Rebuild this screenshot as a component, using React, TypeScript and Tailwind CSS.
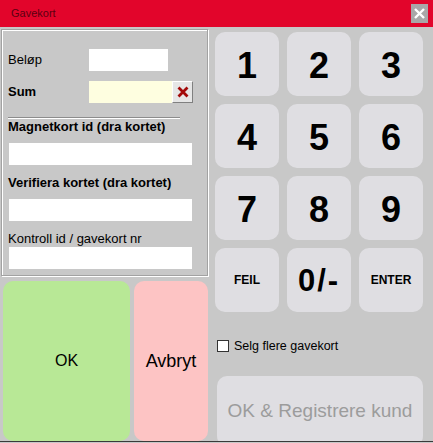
import React from 'react';

const font = { fontFamily: '"Liberation Sans", Arial, sans-serif' };

function Key({ children, className = '' }: { children: React.ReactNode; className?: string }) {
  return (
    <div className={`flex h-[64px] w-[64px] items-center justify-center rounded-[10px] bg-[#dfdee2] text-black ${className}`}>
      {children}
    </div>
  );
}

function Field({ className = '' }: { className?: string }) {
  return <div className={`h-[22px] bg-white ${className}`} />;
}

export default function App() {
  const digits = ['1', '2', '3', '4', '5', '6', '7', '8', '9'];

  return (
    <div className="flex h-[443px] w-[433px] flex-col overflow-hidden bg-[#c8c8c8]" style={font}>
      {/* title bar */}
      <div className="flex h-[27px] shrink-0 items-center justify-between bg-[#e2052b] pl-[11px] pr-[5px]">
        <span className="text-[11px] text-[#5c0010]">Gavekort</span>
        <div className="flex h-[19px] w-[17px] items-center justify-center bg-[#a9a7a8]">
          <svg width="11" height="11" viewBox="0 0 11 11">
            <path d="M1 1L10 10M10 1L1 10" stroke="#fff" strokeWidth="2.4" />
          </svg>
        </div>
      </div>

      {/* body */}
      <div className="flex h-[414px] shrink-0 overflow-hidden">
        {/* left column */}
        <div className="flex w-[209px] shrink-0 flex-col">
          <div className="ml-[1px] mt-[2px] h-[253px] w-[207px] border border-[#a2a2a2] pl-[6px] shadow-[inset_1px_1px_0_#ffffff,1px_1px_0_#ffffff]">
            <div className="mt-[19px] flex h-[22px] items-center">
              <span className="w-[81px] text-[13px] text-black">Beløp</span>
              <Field className="w-[79px]" />
            </div>
            <div className="mt-[10px] flex h-[22px] items-center">
              <span className="w-[81px] text-[13px] font-bold text-black">Sum</span>
              <div className="h-[22px] w-[83px] bg-[#fefee0]" />
              <div className="flex h-[22px] w-[21px] items-center justify-center border border-t-white border-l-white border-r-[#808080] border-b-[#808080] bg-[#e6e6e6]">
                <svg width="12" height="12" viewBox="0 0 12 12">
                  <path d="M1.5 1.5L10.5 10.5M10.5 1.5L1.5 10.5" stroke="#a30a0a" strokeWidth="2.8" />
                </svg>
              </div>
            </div>
            <div className="mt-[14px] h-[2px] w-[172px] border-t border-b border-t-[#8c8c8c] border-b-white" />
            <div className="flex h-[16px] items-center text-[13px] font-bold text-black">Magnetkort id (dra kortet)</div>
            <Field className="ml-[1px] mt-[8px] w-[183px]" />
            <div className="mt-[10px] flex h-[16px] items-center text-[13px] font-bold text-black">Verifiera kortet (dra kortet)</div>
            <Field className="ml-[1px] mt-[8px] w-[183px]" />
            <div className="mt-[10px] flex h-[16px] items-center text-[13px] text-black">Kontroll id / gavekort nr</div>
            <Field className="ml-[1px] w-[183px]" />
          </div>

          <div className="mt-[5px] flex gap-[4px] pl-[3px]">
            <div className="flex h-[160px] w-[127px] shrink-0 items-center justify-center rounded-[10px] bg-[#b8e896] text-[16px] text-black">
              OK
            </div>
            <div className="flex h-[160px] w-[74px] shrink-0 items-center justify-center rounded-[10px] bg-[#fdc4c4] text-[18px] text-black">
              Avbryt
            </div>
          </div>
        </div>

        {/* right column */}
        <div className="flex flex-col pl-[6px]">
          <div className="mt-[5px] grid grid-cols-[64px_64px_64px] gap-[8px]">
            {digits.map((d) => (
              <Key key={d} className="pt-[3px] text-[36px] font-bold">
                {d}
              </Key>
            ))}
            <Key className="text-[12px] font-bold">FEIL</Key>
            <Key className="pt-[2px] text-[31px] font-bold tracking-[2px]">0/-</Key>
            <Key className="text-[12px] font-bold">ENTER</Key>
          </div>

          <div className="ml-[2px] mt-[25px] flex h-[24px] items-center gap-[5px]">
            <div className="h-[12px] w-[12px] border border-[#333] bg-white" />
            <span className="text-[12.5px] text-black">Selg flere gavekort</span>
          </div>

          <div className="ml-[2px] mt-[20px] flex h-[70px] w-[206px] shrink-0 items-center justify-center rounded-[10px] bg-[#dfdee2] text-[19px] text-[#9c9c9c]">
            OK &amp; Registrere kund
          </div>
        </div>
      </div>
      <div className="h-[1px] shrink-0 bg-[#3a3a3a]" />
      <div className="h-[1px] shrink-0 bg-[#c8c8c8]" />
    </div>
  );
}
